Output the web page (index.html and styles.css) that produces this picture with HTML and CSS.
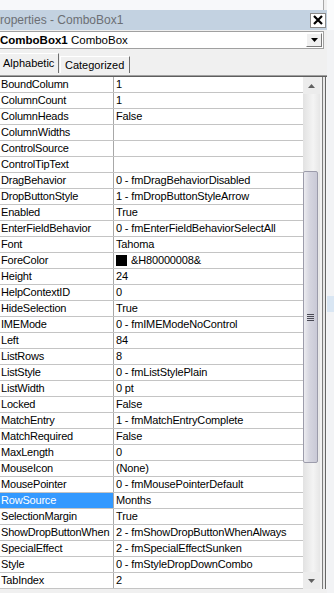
FILE: index.html
```html
<!DOCTYPE html>
<html lang="en">
<head>
<meta charset="UTF-8" />
<meta name="viewport" content="width=device-width, initial-scale=1.0" />
<title>Properties - ComboBox1</title>
<link rel="stylesheet" href="styles.css">
</head>
<body>
<div class="wrap">
  <div class="pane">
    <div class="topstrip"></div>
    <div class="titlebar">
      <span class="title">roperties - ComboBox1</span>
      <span class="close">
        <svg width="10" height="10" viewBox="0 0 10 10"><path d="M1 1 L9 9 M9 1 L1 9" stroke="#000" stroke-width="2.2"/></svg>
      </span>
    </div>
    <div class="objsel">
      <span class="objname"><b>ComboBox1</b> ComboBox</span>
      <span class="drop">
        <svg width="7" height="4" viewBox="0 0 7 4"><path d="M0 0 H7 L3.5 4 Z" fill="#000"/></svg>
      </span>
    </div>
    <div class="tabs">
      <div class="tab active">Alphabetic</div>
      <div class="tab">Categorized</div>
    </div>
    <div class="sheet">
      <div class="sheet-in">
        <div class="grid" id="grid"></div>
        <div class="vscroll">
          <div class="sbtn">
            <svg width="7" height="4" viewBox="0 0 7 4"><path d="M0 4 H7 L3.5 0 Z" fill="#606060"/></svg>
          </div>
          <div class="track">
            <div class="thumb">
              <div class="grip"><i></i><i></i><i></i><i></i></div>
            </div>
          </div>
          <div class="sbtn">
            <svg width="7" height="4" viewBox="0 0 7 4"><path d="M0 0 H7 L3.5 4 Z" fill="#606060"/></svg>
          </div>
        </div>
        <div class="edge"></div>
      </div>
    </div>
  </div>
  <div class="side"><div class="side-top"></div><div class="side-hl"></div></div>
</div>

<script>
  const props = [
    ['BoundColumn', '1'],
    ['ColumnCount', '1'],
    ['ColumnHeads', 'False'],
    ['ColumnWidths', ''],
    ['ControlSource', ''],
    ['ControlTipText', ''],
    ['DragBehavior', '0 - fmDragBehaviorDisabled'],
    ['DropButtonStyle', '1 - fmDropButtonStyleArrow'],
    ['Enabled', 'True'],
    ['EnterFieldBehavior', '0 - fmEnterFieldBehaviorSelectAll'],
    ['Font', 'Tahoma'],
    ['ForeColor', '&H80000008&', true],
    ['Height', '24'],
    ['HelpContextID', '0'],
    ['HideSelection', 'True'],
    ['IMEMode', '0 - fmIMEModeNoControl'],
    ['Left', '84'],
    ['ListRows', '8'],
    ['ListStyle', '0 - fmListStylePlain'],
    ['ListWidth', '0 pt'],
    ['Locked', 'False'],
    ['MatchEntry', '1 - fmMatchEntryComplete'],
    ['MatchRequired', 'False'],
    ['MaxLength', '0'],
    ['MouseIcon', '(None)'],
    ['MousePointer', '0 - fmMousePointerDefault'],
    ['RowSource', 'Months'],
    ['SelectionMargin', 'True'],
    ['ShowDropButtonWhen', '2 - fmShowDropButtonWhenAlways'],
    ['SpecialEffect', '2 - fmSpecialEffectSunken'],
    ['Style', '0 - fmStyleDropDownCombo'],
    ['TabIndex', '2']
  ];
  const selected = 'RowSource';

  const grid = document.getElementById('grid');
  props.forEach(([name, value, swatch]) => {
    const row = document.createElement('div');
    row.className = 'row';

    const n = document.createElement('div');
    n.className = 'name' + (name === selected ? ' sel' : '');
    n.textContent = name;

    const v = document.createElement('div');
    v.className = 'value';
    if (swatch) {
      const s = document.createElement('span');
      s.className = 'swatch';
      v.appendChild(s);
    }
    v.appendChild(document.createTextNode(value));

    row.appendChild(n);
    row.appendChild(v);
    grid.appendChild(row);
  });
</script>
</body>
</html>
```

FILE: styles.css
```css
body {
  margin: 0;
  width: 334px;
  height: 593px;
  overflow: hidden;
  background: #f0f0f0;
  font-family: "Liberation Sans", Arial, sans-serif;
  font-size: 11px;
  color: #000;
}
.wrap {
  display: flex;
  height: 593px;
}
.pane {
  width: 327px;
  display: flex;
  flex-direction: column;
  background: #f0f0f0;
}
.topstrip {
  height: 10px;
  width: 323px;
  background: #f7f8fa;
  border-right: 1px solid #a8a8a8;
}
.titlebar {
  height: 20px;
  background: #c3d2e1;
  display: flex;
  align-items: center;
  justify-content: space-between;
}
.title {
  font-size: 12px;
  color: #6c6f74;
  white-space: nowrap;
}
.close {
  width: 14px;
  height: 13px;
  border: 1px solid #8a8a8a;
  background: #fff;
  margin-right: 1px;
  display: flex;
  align-items: center;
  justify-content: center;
}
.objsel {
  margin-top: 1px;
  height: 18px;
  width: 324px;
  box-sizing: border-box;
  background: #fff;
  border: 1px solid #a0a0a0;
  border-left: none;
  display: flex;
  align-items: center;
  justify-content: space-between;
}
.objname {
  font-size: 11.5px;
  white-space: nowrap;
}
.drop {
  width: 16px;
  height: 14px;
  box-sizing: border-box;
  margin-right: 1px;
  background: #f0f0f0;
  border: 1px solid #fff;
  border-right-color: #7a7a7a;
  border-bottom-color: #7a7a7a;
  display: flex;
  align-items: center;
  justify-content: center;
}
.tabs {
  margin-top: 4px;
  height: 20px;
  display: flex;
  align-items: flex-end;
}
.tab {
  box-sizing: border-box;
  height: 17px;
  line-height: 16px;
  padding: 0 5px 0 4px;
  border-top: 1px solid #fff;
  border-left: 1px solid #fff;
  border-right: 1px solid #6e6e6e;
  margin-left: 1px;
}
.tab.active {
  height: 20px;
  line-height: 19px;
  width: 59px;
  padding-left: 3px;
  border-left: none;
  margin-left: 0;
}
.sheet {
  margin-top: 2px;
  border-top: 1px solid #a0a0a0;
  flex: 1;
  display: flex;
  flex-direction: column;
}
.sheet-in {
  border-top: 1px solid #5e5e5e;
  display: flex;
  align-items: flex-start;
}
.grid {
  width: 303px;
  background: #fff;
}
.row {
  display: flex;
  height: 16px;
  box-sizing: border-box;
  border-bottom: 1px solid #c4c4c4;
  line-height: 15px;
  white-space: nowrap;
  letter-spacing: -0.15px;
}
.name {
  width: 114px;
  box-sizing: border-box;
  padding-left: 1px;
  border-right: 1px solid #a8a8a8;
  overflow: hidden;
  letter-spacing: -0.2px;
}
.name.sel {
  background: #3399ff;
  color: #fff;
}
.value {
  flex: 1;
  padding-left: 2px;
  overflow: hidden;
  display: flex;
  align-items: center;
}
.swatch {
  width: 11px;
  height: 11px;
  background: #000;
  margin: 0 4px 0 0;
}
.vscroll {
  width: 17px;
  height: 512px;
  background: #ececec;
  display: flex;
  flex-direction: column;
}
.sbtn {
  height: 17px;
  display: flex;
  align-items: center;
  justify-content: center;
}
.track {
  flex: 1;
  padding-top: 77px;
  background: linear-gradient(to right, #e2e2e2, #f4f4f4 60%, #e6e6e6);
}
.thumb {
  width: 15px;
  height: 292px;
  box-sizing: border-box;
  border: 1px solid #9c9cab;
  border-radius: 2px;
  background: linear-gradient(to right, #ececf0, #d6d6e0 40%, #c9c9d6);
  display: flex;
  align-items: center;
  justify-content: center;
}
.grip {
  display: flex;
  flex-direction: column;
  gap: 1px;
}
.grip i {
  display: block;
  width: 7px;
  height: 1px;
  background: #4a4a55;
}
.edge {
  width: 7px;
  height: 512px;
  background: linear-gradient(to right, #f2f2f2 0 2px, #7c7c7c 2px 3px, #e8e8e8 3px 5px, #666 5px 6px, #f6f6f6 6px);
}
.side {
  flex: 1;
  background: #f2f3f5;
  display: flex;
  flex-direction: column;
}
.side-top {
  height: 30px;
  background: #fafbfc;
}
.side-hl {
  margin-top: 266px;
  height: 16px;
  background: #d9e6f3;
}
```
